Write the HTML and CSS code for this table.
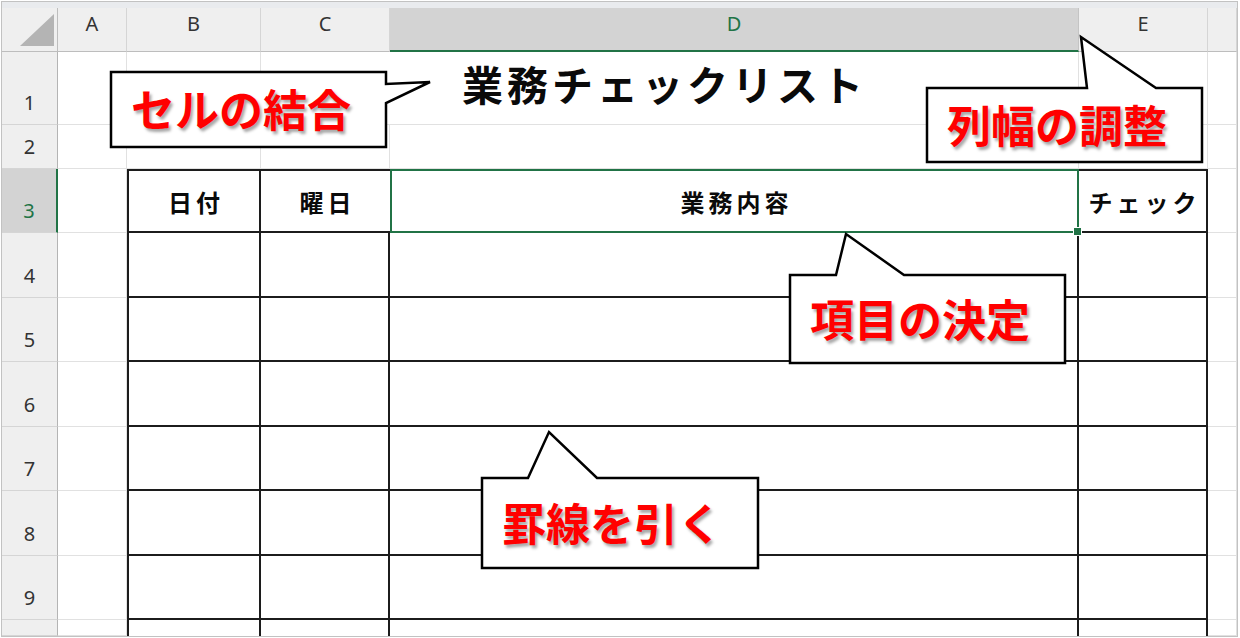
FILE: index.html
```html
<!DOCTYPE html>
<html lang="ja">
<head>
<meta charset="utf-8">
<title>業務チェックリスト</title>
<link rel="stylesheet" href="styles.css">
</head>
<body>
<div class="frame">
  <div class="band"></div>
  <div class="sheet">
    <!-- header row -->
    <div class="ch corner"><svg width="56" height="44" viewBox="0 0 56 44"><polygon points="18,38 52,38 52,6" fill="#b4b4b4"/></svg></div>
    <div class="ch">A</div>
    <div class="ch">B</div>
    <div class="ch">C</div>
    <div class="ch ch-sel">D</div>
    <div class="ch">E</div>
    <div class="ch"></div>

    <!-- row 1 -->
    <div class="rh">1</div>
    <div class="c"></div>
    <div class="c"></div>
    <div class="c title">業務チェックリスト</div>
    <div class="c"></div>
    <div class="c"></div>

    <!-- row 2 -->
    <div class="rh">2</div>
    <div class="c"></div>
    <div class="c"></div>
    <div class="c"></div>
    <div class="c"></div>
    <div class="c"></div>
    <div class="c"></div>

    <!-- row 3 -->
    <div class="rh rh-sel">3</div>
    <div class="c"></div>
    <div class="c t tl tt head">日付</div>
    <div class="c t tt head no-r">曜日</div>
    <div class="c sel head">業務内容</div>
    <div class="c t tt head">チェック</div>
    <div class="c"></div>

    <!-- row 4 -->
    <div class="rh">4</div>
    <div class="c"></div>
    <div class="c t tl"></div>
    <div class="c t"></div>
    <div class="c t"></div>
    <div class="c t"></div>
    <div class="c"></div>

    <!-- row 5 -->
    <div class="rh">5</div>
    <div class="c"></div>
    <div class="c t tl"></div>
    <div class="c t"></div>
    <div class="c t"></div>
    <div class="c t"></div>
    <div class="c"></div>

    <!-- row 6 -->
    <div class="rh">6</div>
    <div class="c"></div>
    <div class="c t tl"></div>
    <div class="c t"></div>
    <div class="c t"></div>
    <div class="c t"></div>
    <div class="c"></div>

    <!-- row 7 -->
    <div class="rh">7</div>
    <div class="c"></div>
    <div class="c t tl"></div>
    <div class="c t"></div>
    <div class="c t"></div>
    <div class="c t"></div>
    <div class="c"></div>

    <!-- row 8 -->
    <div class="rh">8</div>
    <div class="c"></div>
    <div class="c t tl"></div>
    <div class="c t"></div>
    <div class="c t"></div>
    <div class="c t"></div>
    <div class="c"></div>

    <!-- row 9 -->
    <div class="rh">9</div>
    <div class="c"></div>
    <div class="c t tl"></div>
    <div class="c t"></div>
    <div class="c t"></div>
    <div class="c t"></div>
    <div class="c"></div>

    <!-- row 10 (partial) -->
    <div class="rh"></div>
    <div class="c"></div>
    <div class="c t tl tb"></div>
    <div class="c t tb"></div>
    <div class="c t tb"></div>
    <div class="c t tb"></div>
    <div class="c"></div>
  </div>
</div>

<svg class="callouts" width="1240" height="638" viewBox="0 0 1240 638">
  <polygon points="111,72 386,72 386,84 430,82 386,103 386,147 111,147"/>
  <polygon points="927,88 1087,88 1081,37 1156,88 1202,88 1202,162 927,162"/>
  <polygon points="790,275 836,275 846,234 904,275 1065,275 1065,363 790,363"/>
  <polygon points="482,478 528,478 549,432 597,478 758,478 758,568 482,568"/>
</svg>
<div class="lbl l1">セルの結合</div>
<div class="lbl l2">列幅の調整</div>
<div class="lbl l3">項目の決定</div>
<div class="lbl l4">罫線を引く</div>
</body>
</html>
```

FILE: styles.css
```css
* { box-sizing: border-box; }

html, body {
  margin: 0;
  padding: 0;
  background: #ffffff;
}

body {
  position: relative;
  width: 1240px;
  height: 638px;
  overflow: hidden;
  font-family: "Noto Sans", "Noto Sans CJK JP", sans-serif;
}

.frame {
  margin: 1px 0 0 1px;
  width: 1237px;
  border: 1px solid #c2c2c2;
  background: #ffffff;
}

.band {
  height: 6px;
  background: #e9ebee;
}

.sheet {
  display: grid;
  grid-template-columns: 56px 69px 134px 129px 689px 129px 29px;
  grid-template-rows: 44px 73px 44px 64px 65px 64px 65px 64px 65px 64px 16px;
}

/* column headers */
.ch {
  background: #efefef;
  border-right: 1px solid #d5d5d5;
  border-bottom: 1px solid #bdbdbd;
  color: #333333;
  font-size: 20px;
  line-height: 24px;
  text-align: center;
  padding-top: 4px;
}

.corner {
  padding: 0;
  border-right: 1px solid #bdbdbd;
}

.corner svg { display: block; }

.ch-sel {
  background: #d3d3d3;
  color: #217346;
  border-bottom: 2px solid #217346;
  border-right: 1px solid #c4c4c4;
}

/* row headers */
.rh {
  background: #efefef;
  border-right: 1px solid #b4b4b4;
  border-bottom: 1px solid #d5d5d5;
  color: #333333;
  font-size: 20px;
  line-height: 24px;
  display: flex;
  align-items: flex-end;
  justify-content: center;
  padding-bottom: 9px;
}

.rh-sel {
  background: #d3d3d3;
  color: #217346;
  border-right: 2px solid #217346;
}

/* sheet cells */
.c {
  border-right: 1px solid #e1e1e1;
  border-bottom: 1px solid #e1e1e1;
}

.title {
  grid-column: span 2;
  display: flex;
  align-items: flex-end;
  justify-content: center;
  padding: 0 10px 17px 0;
  font-family: "Noto Sans CJK JP", sans-serif;
  font-weight: 700;
  font-size: 41px;
  line-height: 48px;
  letter-spacing: 4px;
  color: #0a0a0a;
}

/* table */
.t {
  border-right: 2px solid #1c1c1c;
  border-bottom: 2px solid #1c1c1c;
}

.tl { border-left: 2px solid #1c1c1c; }
.tt { border-top: 2px solid #1c1c1c; }
.tb { border-bottom: none; }
.no-r { border-right: none; }

.head {
  display: flex;
  align-items: center;
  justify-content: center;
  font-family: "Noto Sans CJK JP", sans-serif;
  font-weight: 700;
  font-size: 24px;
  letter-spacing: 4px;
  color: #0a0a0a;
  padding-left: 4px;
}

.sel {
  position: relative;
  border: 2px solid #217346;
}

.sel::after {
  content: "";
  position: absolute;
  right: -5px;
  bottom: -5px;
  width: 7px;
  height: 7px;
  background: #217346;
  border: 1px solid #ffffff;
}

/* callouts */
.callouts {
  position: absolute;
  left: 0;
  top: 0;
  pointer-events: none;
}

.callouts polygon {
  fill: #ffffff;
  stroke: #000000;
  stroke-width: 2.5;
  stroke-linejoin: miter;
}

.lbl {
  position: absolute;
  display: flex;
  align-items: center;
  padding: 0 0 3px 20px;
  font-family: "Noto Sans CJK JP", sans-serif;
  font-weight: 700;
  font-size: 44px;
  line-height: 1;
  color: #ff0000;
  text-shadow: 2px 3px 3px rgba(0, 0, 0, 0.35);
  white-space: nowrap;
}

.l1 { left: 111px; top: 72px; width: 275px; height: 75px; }
.l2 { left: 927px; top: 88px; width: 275px; height: 74px; }
.l3 { left: 790px; top: 275px; width: 275px; height: 88px; }
.l4 { left: 482px; top: 478px; width: 276px; height: 90px; }
```
